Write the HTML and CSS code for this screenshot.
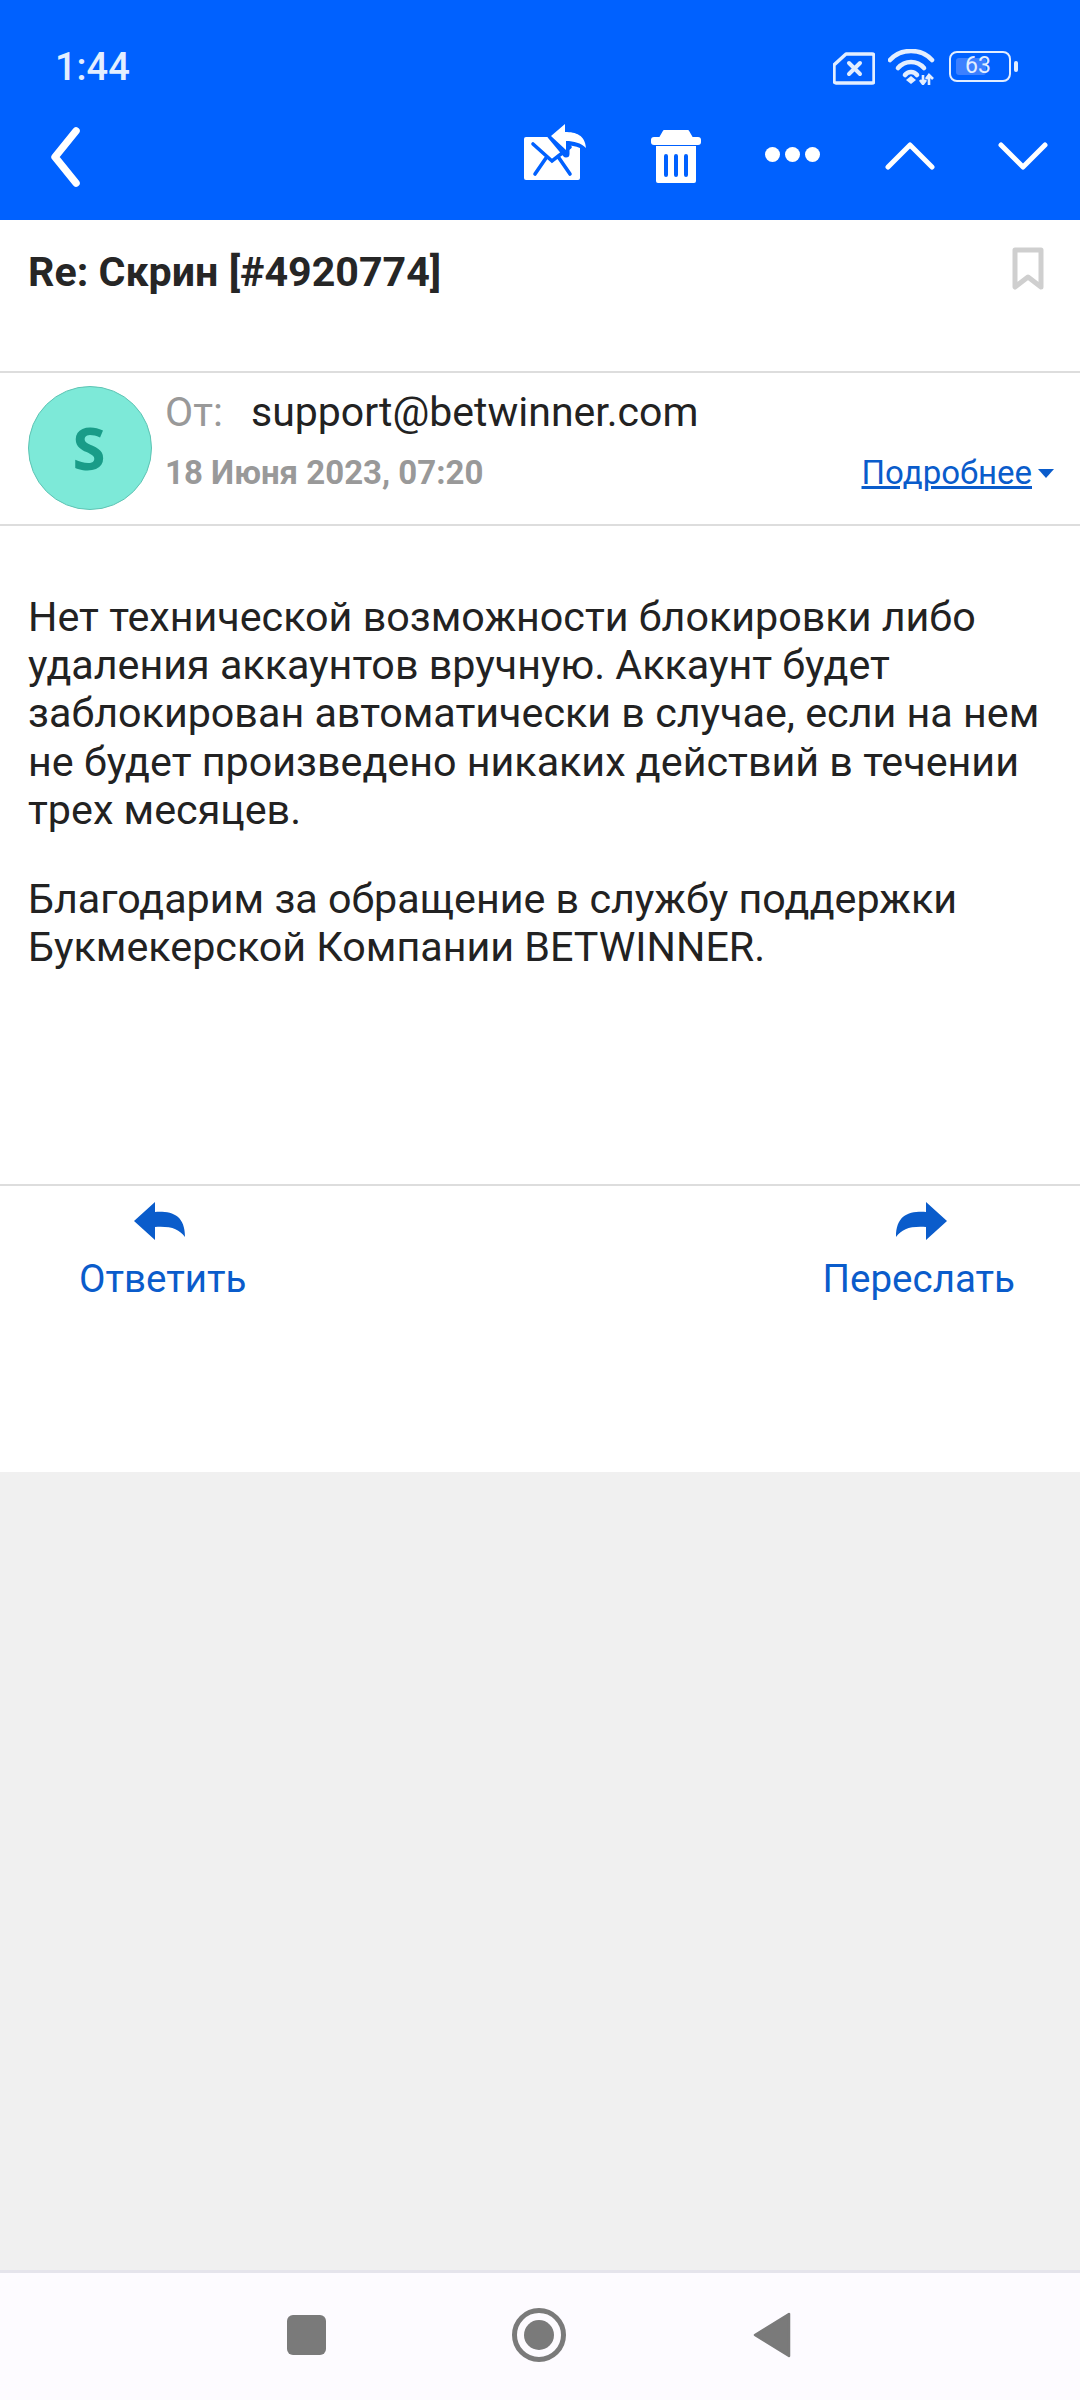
FILE: index.html
```html
<!DOCTYPE html>
<html lang="ru">
<head>
    <meta charset="UTF-8">
    <meta name="viewport" content="width=device-width, initial-scale=1.0">
    <title>Re: Скрин</title>
    <link rel="stylesheet" href="styles.css">
</head>
<body>
    <div class="wrap">
        <header class="top">
            <div class="status">
                <span class="time">1:44</span>
                <svg class="simIcon" width="42" height="33" viewBox="0 0 42 33">
                    <path d="M13 2H39a2 2 0 0 1 2 2V29a2 2 0 0 1-2 2H3a2 2 0 0 1-2-2V13Z" fill="none" stroke="#e3eeff" stroke-width="3.4" stroke-linejoin="round"/>
                    <path d="M16 11L27 22M27 11L16 22" stroke="#e3eeff" stroke-width="4" stroke-linecap="round"/>
                </svg>
                <svg class="wifiIcon" width="48" height="36" viewBox="0 0 48 36">
                    <path d="M2 11C13 -1 33 -1 44 11" fill="none" stroke="#e3eeff" stroke-width="4.6" stroke-linecap="round"/>
                    <path d="M10 19C17 11 29 11 36 19" fill="none" stroke="#e3eeff" stroke-width="4.6" stroke-linecap="round"/>
                    <path d="M17 26C20 22 26 22 29 26" fill="none" stroke="#e3eeff" stroke-width="4.6" stroke-linecap="round"/>
                    <path d="M18 31L23 27L28 31L23 35Z" fill="#e3eeff"/>
                    <path d="M35 26V35M32 31L35 35L38 31" fill="none" stroke="#e3eeff" stroke-width="2.6"/>
                    <path d="M41 36V27M38 30L41 26L45 30" fill="none" stroke="#e3eeff" stroke-width="2.6"/>
                </svg>
                <div class="battery">
                    <div class="batteryBody">
                        <div class="batteryFill"></div>
                        <span class="batteryText">63</span>
                    </div>
                    <div class="batteryNub"></div>
                </div>
            </div>
            <div class="toolbar">
                <svg class="backIcon" width="32" height="62" viewBox="0 0 32 62">
                    <path d="M26 5L5 31L26 57" fill="none" stroke="#fff" stroke-width="7.5" stroke-linecap="round" stroke-linejoin="round"/>
                </svg>
                <svg class="mailIcon" width="64" height="58" viewBox="0 0 64 58">
                    <path d="M2 14H54a2 2 0 0 1 2 2V55a2 2 0 0 1-2 2H2a2 2 0 0 1-2-2V16a2 2 0 0 1 2-2Z" fill="#fff"/>
                    <path d="M9 21L28 38L46 24M11 51L22 35M46 51L35 35" fill="none" stroke="#0061ff" stroke-width="3.6" stroke-linecap="round"/>
                    <path d="M27 13L41 0V9C52 9 61 12 62 25C57 20 50 19 42 19V31Z" fill="#0061ff" stroke="#0061ff" stroke-width="7" stroke-linejoin="round"/>
                    <path d="M27 13L41 1V9C52 9 61 12 62 25C57 20 50 18 42 18V27Z" fill="#fff"/>
                </svg>
                <svg class="trashIcon" width="50" height="54" viewBox="0 0 50 54">
                    <path d="M9 8L13 1H37L41 8Z" fill="#fff" stroke="#fff" stroke-width="2" stroke-linejoin="round"/>
                    <rect x="0" y="7" width="50" height="8" rx="3" fill="#fff"/>
                    <path d="M5 16H45V51a2 2 0 0 1-2 2H7a2 2 0 0 1-2-2Z" fill="#fff"/>
                    <path d="M15 26V45M25 26V45M35 26V45" stroke="#0061ff" stroke-width="4" stroke-linecap="round"/>
                </svg>
                <div class="dots"><i></i><i></i><i></i></div>
                <svg class="upIcon" width="50" height="30" viewBox="0 0 50 30">
                    <path d="M3 26L25 4L47 26" fill="none" stroke="#fff" stroke-width="5" stroke-linecap="round" stroke-linejoin="round"/>
                </svg>
                <svg class="downIcon" width="50" height="30" viewBox="0 0 50 30">
                    <path d="M3 4L25 26L47 4" fill="none" stroke="#fff" stroke-width="5" stroke-linecap="round" stroke-linejoin="round"/>
                </svg>
            </div>
        </header>

        <section class="mail">
            <div class="subject">
                <h1>Re: Скрин [#4920774]</h1>
                <svg class="markIcon" width="32" height="44" viewBox="0 0 32 44">
                    <path d="M3 3H29V40L16 30L3 40Z" fill="none" stroke="#cfcfcf" stroke-width="5" stroke-linejoin="round"/>
                </svg>
            </div>
            <div class="sender">
                <div class="avatar">S</div>
                <div class="senderInfo">
                    <div class="fromRow"><span class="fromLabel">От:</span><span class="fromMail">support@betwinner.com</span></div>
                    <div class="dateRow">
                        <span class="date">18 Июня 2023, 07:20</span>
                        <span class="more"><a href="#">Подробнее</a><i class="caret"></i></span>
                    </div>
                </div>
            </div>
            <div class="content">
                <p>Нет технической возможности блокировки либо удаления аккаунтов вручную. Аккаунт будет заблокирован автоматически в случае, если на нем не будет произведено никаких действий в течении трех месяцев.</p>
                <p>Благодарим за обращение в службу поддержки Букмекерской Компании BETWINNER.</p>
            </div>
            <div class="actions">
                <a class="action reply" href="#">
                    <svg width="52" height="38" viewBox="0 0 52 38">
                        <path d="M0 19L21 0V10C38 9 51 13 51 35C45 27 37 24 21 25V38Z" fill="#0a5ccb"/>
                    </svg>
                    Ответить
                </a>
                <a class="action forward" href="#">
                    <svg width="52" height="38" viewBox="0 0 52 38">
                        <path d="M52 19L31 0V10C14 9 1 13 1 35C7 27 15 24 31 25V38Z" fill="#0a5ccb"/>
                    </svg>
                    Переслать
                </a>
            </div>
        </section>

        <div class="empty"></div>

        <nav class="navBar">
            <div class="navSquare"></div>
            <div class="navHome"><div class="navDot"></div></div>
            <svg class="navBack" width="38" height="46" viewBox="0 0 38 46">
                <path d="M36 2V44L2 23Z" fill="#7a7a7a" stroke="#7a7a7a" stroke-width="2.5" stroke-linejoin="round"/>
            </svg>
        </nav>
    </div>
</body>
</html>
```

FILE: styles.css
```css
* {
    box-sizing: border-box;
}
html, body {
    margin: 0;
    padding: 0;
}
body {
    font-family: Roboto, "Noto Sans", sans-serif;
    color: #222;
}
svg {
    display: block;
    flex: none;
}
.wrap {
    width: 1080px;
    height: 2400px;
    display: flex;
    flex-direction: column;
    background-color: #f0f0f0;
}

/* blue header */
.top {
    height: 220px;
    background-color: #0061ff;
}
.status {
    height: 100px;
    display: flex;
    align-items: flex-start;
    padding: 46px 0 0 55px;
}
.time {
    width: 778px;
    font-size: 38px;
    line-height: 42px;
    font-weight: 500;
    color: #e3eeff;
}
.simIcon {
    margin-top: 6px;
}
.wifiIcon {
    margin: 3px 0 0 13px;
}
.battery {
    display: flex;
    align-items: center;
    margin: 5px 0 0 13px;
}
.batteryBody {
    width: 62px;
    height: 31px;
    padding: 5px;
    position: relative;
    border: 2.5px solid #e3eeff;
    border-radius: 8px;
}
.batteryFill {
    width: 30px;
    height: 100%;
    background-color: #3d80ff;
    border-radius: 3px;
}
.batteryText {
    position: absolute;
    left: 14px;
    top: 0;
    font-size: 23px;
    line-height: 26px;
    color: #e3eeff;
}
.batteryNub {
    width: 4px;
    height: 11px;
    margin-left: 3px;
    background-color: #e3eeff;
    border-radius: 2px;
}
.toolbar {
    height: 120px;
    display: flex;
    align-items: flex-start;
    padding-left: 50px;
}
.backIcon {
    margin-top: 26px;
}
.mailIcon {
    margin: 23px 0 0 442px;
}
.trashIcon {
    margin: 30px 0 0 63px;
}
.dots {
    display: flex;
    gap: 5px;
    margin: 47px 0 0 64px;
}
.dots i {
    width: 15px;
    height: 15px;
    background-color: #fff;
    border-radius: 50%;
}
.upIcon {
    margin: 41px 0 0 65px;
}
.downIcon {
    margin: 41px 0 0 63px;
}

/* mail */
.mail {
    height: 1252px;
    background-color: #fff;
}
.subject {
    height: 153px;
    display: flex;
    justify-content: space-between;
    padding: 28px 36px 0 28px;
    border-bottom: 2px solid #ddd;
}
.subject h1 {
    margin: 0;
    font-size: 41.2px;
    line-height: 48px;
    font-weight: 700;
    color: #262626;
}
.markIcon {
    margin-top: -1px;
}
.sender {
    height: 153px;
    display: flex;
    padding: 13px 26px 0 28px;
    border-bottom: 2px solid #ddd;
}
.avatar {
    width: 124px;
    height: 124px;
    display: flex;
    align-items: center;
    justify-content: center;
    flex: none;
    padding: 0 2px 2px 0;
    font-family: "Noto Sans", sans-serif;
    font-size: 60px;
    font-weight: 700;
    color: #199c88;
    background-color: #7de9d8;
    border: 1px solid #5fc4b4;
    border-radius: 50%;
}
.senderInfo {
    flex: 1;
    padding-left: 13px;
}
.fromRow {
    display: flex;
    font-size: 41px;
    line-height: 48px;
    margin-top: 2px;
}
.fromLabel {
    width: 86px;
    color: #999;
}
.fromMail {
    color: #222;
}
.dateRow {
    display: flex;
    justify-content: space-between;
    margin-top: 17px;
}
.date {
    font-size: 33px;
    line-height: 40px;
    font-weight: 700;
    color: #999;
}
.more {
    display: flex;
    align-items: center;
    gap: 6px;
    font-size: 33px;
    line-height: 40px;
}
.more a {
    color: #0a5ccb;
}
.caret {
    width: 0;
    height: 0;
    border-left: 8px solid transparent;
    border-right: 8px solid transparent;
    border-top: 9px solid #0a5ccb;
}
.content {
    height: 658px;
    padding: 67px 28px 0;
    font-size: 41.25px;
    line-height: 48.2px;
    color: #222;
}
.content p {
    margin: 0 0 41px;
}
.actions {
    height: 288px;
    display: flex;
    justify-content: space-between;
    padding: 0 65px 0 79px;
    border-top: 2px solid #ddd;
}
.action {
    display: flex;
    flex-direction: column;
    align-items: center;
    gap: 17px;
    padding-top: 16px;
    font-size: 38.5px;
    line-height: 44px;
    color: #0a5ccb;
    text-decoration: none;
}
.reply svg {
    margin-left: -6px;
}
.forward svg {
    margin-left: 4px;
}

.empty {
    flex: 1;
}

/* bottom nav */
.navBar {
    height: 130px;
    display: flex;
    align-items: center;
    padding: 0 0 3px 287px;
    background-color: #fdfbff;
    border-top: 3px solid #e5e4ec;
}
.navSquare {
    width: 39px;
    height: 40px;
    background-color: #7a7a7a;
    border-radius: 6px;
}
.navHome {
    width: 54px;
    height: 54px;
    display: flex;
    align-items: center;
    justify-content: center;
    margin-left: 186px;
    border: 5px solid #7a7a7a;
    border-radius: 50%;
}
.navDot {
    width: 30px;
    height: 30px;
    background-color: #7a7a7a;
    border-radius: 50%;
}
.navBack {
    margin-left: 187px;
}
```
